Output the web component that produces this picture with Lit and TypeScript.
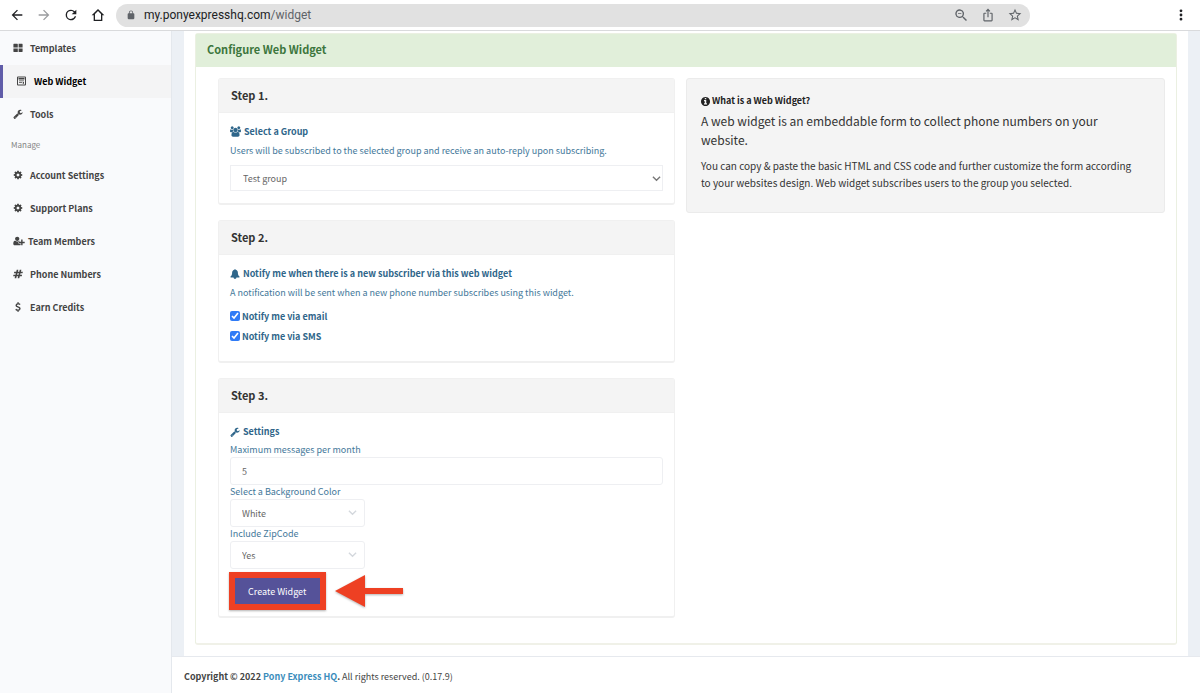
import { LitElement, html, css, svg } from "lit";
import { customElement, property, state } from "lit/decorators.js";

type Glyph = { box: string; d: string };

const GLYPHS: Record<string, Glyph> = {
  templates: {
    box: "0 0 24 22",
    d: "M2 1h8.500a1 1 0 0 1 1 1v7.500H1V2a1 1 0 0 1 1-1zM13.500 1H22a1 1 0 0 1 1 1v7.500h-9.500zM1 12h10.500v8.500H2a1 1 0 0 1-1-1zM13.500 12H23v7.500a1 1 0 0 1-1 1h-8.500z",
  },
  widget: {
    box: "0 0 20 20",
    d: "M3 1h14a2 2 0 0 1 2 2v14a2 2 0 0 1-2 2H3a2 2 0 0 1-2-2V3a2 2 0 0 1 2-2zM3 3v14h14V3zM4 4h12v3H4zM5 9h10v1.500H5zM5 12h6v1.500H5zM12.500 12H15v3.500h-2.500z",
  },
  cog: {
    box: "0 0 1792 1792",
    d: "M1152 896q0-106-75-181t-181-75-181 75-75 181 75 181 181 75 181-75 75-181zm512-109v222q0 12-8 23t-20 13l-185 28q-19 54-39 91 35 50 107 138 10 12 10 25t-9 23q-27 37-99 108t-94 71q-12 0-26-9l-138-108q-44 23-91 38-16 136-29 186-7 28-36 28h-222q-14 0-24.5-8.5t-11.5-21.5l-28-184q-49-16-90-37l-141 107q-10 9-25 9-14 0-25-11-126-114-165-168-7-10-7-23 0-12 8-23 15-21 51-66.5t54-70.5q-27-50-41-99l-183-27q-13-2-21-12.5t-8-23.5v-222q0-12 8-23t19-13l186-28q14-46 39-92-40-57-107-138-10-12-10-24 0-10 9-23 26-36 98.5-107.5t94.5-71.5q13 0 26 10l138 107q44-23 91-38 16-136 29-186 7-28 36-28h222q14 0 24.5 8.500t11.500 21.500l28 184q49 16 90 37l142-107q9-9 24-9 13 0 25 10 129 119 165 170 7 8 7 22 0 12-8 23-15 21-51 66.500t-54 70.500q26 50 41 98l183 28q13 2 21 12.500t8 23.500z",
  },
  wrench: {
    box: "0 0 1792 1792",
    d: "M448 1472q0-26-19-45t-45-19-45 19-19 45 19 45 45 19 45-19 19-45zm644-420l-682 682q-37 37-90 37-52 0-91-37l-106-108q-38-36-38-90 0-53 38-91l681-681q39 98 114.500 173.500t173.500 114.500zm634-435q0 39-23 106-47 134-164.500 217.500t-258.500 83.500q-185 0-316.500-131.500t-131.500-316.500 131.500-316.500 316.500-131.500q58 0 121.500 16.500t107.500 46.500q16 11 16 28t-16 28l-293 169v224l193 107q5-3 79-48.500t135.500-81 70.500-35.500q15 0 23.500 10t8.500 25z",
  },
  userPlus: {
    box: "0 0 2048 1792",
    d: "M704 896q-159 0-271.500-112.500t-112.500-271.500 112.500-271.500 271.500-112.500 271.500 112.500 112.500 271.500-112.500 271.500-271.500 112.500zm960 128h352q13 0 22.500 9.500t9.500 22.500v192q0 13-9.500 22.500t-22.500 9.500h-352v352q0 13-9.500 22.500t-22.500 9.500h-192q-13 0-22.500-9.500t-9.500-22.500v-352h-352q-13 0-22.500-9.500t-9.500-22.500v-192q0-13 9.500-22.500t22.500-9.500h352v-352q0-13 9.500-22.500t22.500-9.500h192q13 0 22.500 9.500t9.500 22.500v352zm-736 224q0 52 38 90t90 38h256v238q-68 50-171 50h-874q-121 0-194-69t-73-190q0-53 3.500-103.500t14-109 26.500-108.500 43-97.500 62-81 85.500-53.500 111.500-20q19 0 39 17 79 61 154.500 91.500t164.500 30.500 164.500-30.500 154.500-91.500q20-17 39-17 132 0 217 96h-223q-52 0-90 38t-38 90v192z",
  },
  hashtag: {
    box: "0 0 1792 1792",
    d: "M991 1024l64-256h-254l-64 256h254zm768-504l-56 224q-7 24-31 24h-327l-64 256h311q15 0 25 12 10 14 6 28l-56 224q-5 24-31 24h-327l-81 328q-7 24-31 24h-224q-16 0-26-12-9-12-6-28l78-312h-254l-81 328q-7 24-31 24h-225q-15 0-25-12-9-12-6-28l78-312h-311q-15 0-25-12-9-12-6-28l56-224q7-24 31-24h327l64-256h-311q-15 0-25-12-10-14-6-28l56-224q5-24 31-24h327l81-328q7-24 32-24h224q15 0 25 12 9 12 6 28l-78 312h254l81-328q7-24 32-24h224q15 0 25 12 9 12 6 28l-78 312h311q15 0 25 12 9 12 6 28z",
  },
  dollar: {
    box: "384 0 1024 1792",
    d: "M1362 1185q0 153-99.500 263.500t-258.500 136.500v175q0 14-9 23t-23 9h-135q-13 0-22.500-9.500t-9.500-22.500v-175q-66-9-127.500-31t-101.500-44.500-74-48-46.500-37.500-17.500-18q-17-21-2-41l103-135q7-10 23-12 15-2 24 9l2 2q113 99 243 125 37 8 74 8 81 0 142.500-43t61.500-122q0-28-15-53t-33.500-42-58.500-37.500-66-32-80-32.500q-39-16-61.500-25t-61.500-26.500-62.500-31-56.500-35.500-53.500-42.500-43.500-49-35.500-58-21-66.500-8.500-78q0-138 98-242t255-134v-180q0-13 9.500-22.500t22.500-9.500h135q14 0 23 9t9 23v176q57 6 110.500 23t87 33.500 63.500 37.500 39 29 15 14q17 18 5 38l-81 146q-8 15-23 16-14 3-27-7-3-3-14.500-12t-39-26.500-58.500-32-74.500-26-85.500-11.500q-95 0-155 43t-60 111q0 26 8.500 48t29.500 41.500 39.500 33 56 31 60.500 27 70 27.500q53 20 81 31.500t76 35 75.500 42.500 62 50 53 63.500 31.500 76.500 13 94z",
  },
  users: {
    box: "-64 0 1920 1792",
    d: "M529 896q-162 5-265 128h-134q-82 0-138-40.500t-56-118.500q0-353 124-353 6 0 43.500 21t97.500 42.500 119 21.500q67 0 133-23-5 37-5 66 0 139 81 256zm1071 637q0 120-73 189.500t-194 69.500h-874q-121 0-194-69.500t-73-189.500q0-53 3.500-103.500t14-109 26.500-108.500 43-97.500 62-81 85.500-53.500 111.500-20q10 0 43 21.500t73 48 107 48 135 21.500 135-21.500 107-48 73-48 43-21.500q61 0 111.500 20t85.500 53.500 62 81 43 97.500 26.500 108.500 14 109 3.500 103.500zm-1024-1277q0 106-75 181t-181 75-181-75-75-181 75-181 181-75 181 75 75 181zm704 384q0 159-112.500 271.500t-271.500 112.500-271.500-112.500-112.500-271.500 112.500-271.500 271.500-112.500 271.500 112.500 112.500 271.500zm576 225q0 78-56 118.500t-138 40.500h-134q-103-123-265-128 81-117 81-256 0-29-5-66 66 23 133 23 59 0 119-21.500t97.500-42.500 43.500-21q124 0 124 353zm-128-609q0 106-75 181t-181 75-181-75-75-181 75-181 181-75 181 75 75 181z",
  },
  bell: {
    box: "64 0 1664 1792",
    d: "M1728 1408q0 52-38 90t-90 38h-448q0 106-75 181t-181 75-181-75-75-181h-448q-52 0-90-38t-38-90q50-42 91-88t85-119.500 74.500-158.500 50-206 19.500-260q0-152 117-282.500t307-158.500q-8-19-8-39 0-40 28-68t68-28 68 28 28 68q0 20-8 39 190 28 307 158.500t117 282.500q0 139 19.500 260t50 206 74.500 158.500 85 119.500 91 88z",
  },
  info: {
    box: "128 128 1536 1536",
    d: "M1152 1376v-160q0-14-9-23t-23-9h-96v-512q0-14-9-23t-23-9h-320q-14 0-23 9t-9 23v160q0 14 9 23t23 9h96v320h-96q-14 0-23 9t-9 23v160q0 14 9 23t23 9h448q14 0 23-9t9-23zm-128-896v-160q0-14-9-23t-23-9h-192q-14 0-23 9t-9 23v160q0 14 9 23t23 9h192q14 0 23-9t9-23zm640 416q0 209-103 385.500t-279.500 279.500-385.500 103-385.500-103-279.500-279.500-103-385.500 103-385.500 279.500-279.500 385.500-103 385.500 103 279.500 279.500 103 385.500z",
  },
  back: { box: "0 0 24 24", d: "M20 11H7.800l5.600-5.600L12 4l-8 8 8 8 1.400-1.400L7.800 13H20z" },
  forward: { box: "0 0 24 24", d: "M12 4l-1.400 1.400 5.600 5.600H4v2h12.200l-5.600 5.600L12 20l8-8z" },
  reload: {
    box: "0 0 24 24",
    d: "M17.650 6.350A7.958 7.958 0 0 0 12 4a8 8 0 1 0 7.730 10h-2.080A5.990 5.990 0 0 1 12 18a6 6 0 1 1 0-12c1.660 0 3.140.690 4.220 1.780L13 11h7V4z",
  },
  home: { box: "0 0 24 24", d: "M12 3L2.500 12.500h3V21h13v-8.500h3zM12 5.900l4.500 4.600V19h-9v-8.500z" },
  lock: {
    box: "0 0 24 24",
    d: "M18 8h-1V6A5 5 0 0 0 7 6v2H6a2 2 0 0 0-2 2v10a2 2 0 0 0 2 2h12a2 2 0 0 0 2-2V10a2 2 0 0 0-2-2zM8.900 6a3.100 3.100 0 0 1 6.200 0v2H8.900z",
  },
  zoomOut: {
    box: "1 1 21 21",
    d: "M15.500 14h-.790l-.280-.270A6.500 6.500 0 1 0 13.730 14.430l.270.280v.790l5 4.990L20.490 19zM9.500 14a4.500 4.500 0 1 1 0-9 4.500 4.500 0 0 1 0 9zM7 9h5v1H7z",
  },
  share: {
    box: "0 0 24 24",
    d: "M16 5l-1.420 1.420-1.590-1.590V16h-1.980V4.830L9.420 6.420 8 5l4-4zM20 10v11a2 2 0 0 1-2 2H6a2 2 0 0 1-2-2V10a2 2 0 0 1 2-2h3v2H6v11h12V10h-3V8h3a2 2 0 0 1 2 2z",
  },
  star: {
    box: "1 1 22 22",
    d: "M22 9.240l-7.190-.620L12 2 9.190 8.630 2 9.240l5.460 4.730L5.820 21 12 17.270 18.180 21l-1.630-7.030zM12 15.400l-3.760 2.270 1-4.280-3.320-2.880 4.380-.380L12 6.100l1.710 4.040 4.380.380-3.320 2.880 1 4.280z",
  },
  more: { box: "2 2 20 20", d: "M12 8a2 2 0 1 0 0-4 2 2 0 0 0 0 4zm0 2a2 2 0 1 0 0 4 2 2 0 0 0 0-4zm0 6a2 2 0 1 0 0 4 2 2 0 0 0 0-4z" },
};

@customElement("app-icon")
class AppIcon extends LitElement {
  @property() name = "cog";
  static styles = css`
    :host {
      display: inline-flex;
      width: 10px;
      height: 10px;
      flex: none;
    }
    .glyph {
      width: 100%;
      height: 100%;
      fill: currentColor;
      fill-rule: evenodd;
    }
  `;
  render() {
    const g = GLYPHS[this.name];
    return html`<svg class="glyph" viewBox=${g.box} aria-hidden="true">${svg`<path d=${g.d}></path>`}</svg>`;
  }
}

const textBase = css`
  * {
    box-sizing: border-box;
  }
  h1, h2, h3, p {
    margin: 0;
  }
  a {
    color: inherit;
    text-decoration: none;
  }
  button, input, select {
    font: inherit;
    color: inherit;
  }
`;

@customElement("browser-bar")
class BrowserBar extends LitElement {
  static styles = [
    textBase,
    css`
      :host {
        display: flex;
        align-items: center;
        height: 31px;
        padding: 0 12px 0 9px;
        border-bottom: 1px solid #d9dadc;
        background: #fff;
        color: #202124;
      }
      .tool {
        display: flex;
        padding: 0;
        border: 0;
        background: none;
      }
      .tool app-icon {
        width: 14px;
        height: 14px;
      }
      .nav {
        display: flex;
        gap: 11px;
        margin-right: 10px;
      }
      .nav app-icon {
        width: 16px;
        height: 16px;
      }
      .faded {
        color: #9a9c9f;
      }
      .address {
        flex: 1;
        display: flex;
        align-items: center;
        gap: 8px;
        height: 23px;
        padding: 0 8px 0 10px;
        border-radius: 12px;
        background: #e1e1e1;
        color: #5f6368;
      }
      .address .lock {
        width: 10px;
        height: 10px;
      }
      .url {
        flex: 1;
        min-width: 0;
        font: 12px/16px Roboto, sans-serif;
      }
      .host {
        color: #202124;
      }
      .tools {
        display: flex;
        gap: 13px;
      }
      .menu {
        margin-left: 144px;
      }
    `,
  ];
  render() {
    return html`
      <div class="nav">
        <button class="tool" aria-label="Back"><app-icon name="back"></app-icon></button>
        <button class="tool faded" aria-label="Forward"><app-icon name="forward"></app-icon></button>
        <button class="tool" aria-label="Reload"><app-icon name="reload"></app-icon></button>
        <button class="tool" aria-label="Home"><app-icon name="home"></app-icon></button>
      </div>
      <div class="address">
        <app-icon class="lock" name="lock"></app-icon>
        <span class="url"><span class="host">my.ponyexpresshq.com</span>/widget</span>
        <div class="tools">
          <button class="tool" aria-label="Zoom out"><app-icon name="zoomOut"></app-icon></button>
          <button class="tool" aria-label="Share"><app-icon name="share"></app-icon></button>
          <button class="tool" aria-label="Bookmark"><app-icon name="star"></app-icon></button>
        </div>
      </div>
      <button class="tool menu" aria-label="Menu"><app-icon name="more"></app-icon></button>
    `;
  }
}

@customElement("side-nav")
class SideNav extends LitElement {
  static styles = [
    textBase,
    css`
      :host {
        display: block;
        width: 172px;
        flex: none;
        border-right: 1px solid #e4e8ed;
        background: #f9fafc;
        color: #444;
        font-weight: 700;
        font-size: 9px;
        line-height: 17px;
      }
      .item {
        display: flex;
        align-items: center;
        gap: 7px;
        height: 33px;
        padding: 0 0 1px 13px;
      }
      .first {
        height: 34px;
        padding-bottom: 0;
      }
      .active {
        border-left: 3px solid #605ca8;
        background: #f4f4f5;
        color: #000;
      }
      .active app-icon {
        width: 11px;
        color: #444;
      }
      .wide {
        gap: 3px;
      }
      .wide app-icon {
        width: 12px;
      }
      .heading {
        padding: 5px 11px 6px;
        color: #848484;
        font-weight: 400;
        font-size: 8px;
      }
    `,
  ];
  render() {
    return html`
      <nav>
        <a class="item first" href="#templates"><app-icon name="templates"></app-icon>Templates</a>
        <a class="item active" href="#widget" aria-current="page"><app-icon name="widget"></app-icon>Web Widget</a>
        <a class="item" href="#tools"><app-icon name="wrench"></app-icon>Tools</a>
        <div class="heading">Manage</div>
        <a class="item" href="#account"><app-icon name="cog"></app-icon>Account Settings</a>
        <a class="item" href="#support"><app-icon name="cog"></app-icon>Support Plans</a>
        <a class="item wide" href="#team"><app-icon name="userPlus"></app-icon>Team Members</a>
        <a class="item" href="#numbers"><app-icon name="hashtag"></app-icon>Phone Numbers</a>
        <a class="item" href="#credits"><app-icon name="dollar"></app-icon>Earn Credits</a>
      </nav>
    `;
  }
}

@customElement("step-card")
class StepCard extends LitElement {
  @property() heading = "";
  static styles = [
    textBase,
    css`
      :host {
        display: block;
        border: 1px solid #f0f0f0;
        border-bottom-width: 2px;
        border-radius: 3px;
        background: #fff;
      }
      .title {
        padding: 8px 12px;
        border-bottom: 1px solid #f0f0f0;
        background: #f4f4f4;
        color: #333;
        font-size: 11px;
        line-height: 17px;
      }
      .body {
        padding: 10px 11px 11px;
      }
    `,
  ];
  render() {
    return html`<h2 class="title">${this.heading}</h2><div class="body"><slot></slot></div>`;
  }
}

@customElement("widget-form")
class WidgetForm extends LitElement {
  @state() private viaEmail = true;
  @state() private viaSms = true;
  static styles = [
    textBase,
    css`
      :host {
        display: flex;
        flex-direction: column;
        gap: 15px;
        color: #31708f;
        font-size: 9px;
      }
      .topic {
        display: flex;
        align-items: center;
        gap: 3px;
        color: #2f668a;
        font-size: 9px;
        line-height: 17px;
      }
      .crowd {
        width: 11px;
        height: 11px;
      }
      .hint {
        display: block;
        padding: 2px 0;
        color: #44789a;
        line-height: 17px;
      }
      .control {
        display: block;
        width: 100%;
        height: 28px;
        padding: 0 12px;
        border: 1px solid #eeeff2;
        background: #fff;
        color: #666;
      }
      .pick {
        position: relative;
        display: block;
      }
      .pick select {
        appearance: none;
      }
      .group {
        margin: 4px 0 1px;
      }
      .group .control {
        height: 26px;
        padding: 0 12px;
      }
      .caret {
        position: absolute;
        right: 2px;
        top: 9px;
        width: 9px;
        height: 9px;
        fill: none;
        stroke: #777;
        stroke-width: 1.500;
        pointer-events: none;
      }
      .small {
        width: 135px;
      }
      .small .caret {
        right: 8px;
        stroke: #d4d8dd;
      }
      .rounded {
        padding: 0 11px;
        border-radius: 3px;
      }
      .settings {
        margin-bottom: 3px;
      }
      .label {
        display: block;
        color: #44789a;
        line-height: 14px;
      }
      .check {
        display: flex;
        align-items: center;
        gap: 2px;
        color: #2f668a;
        font-weight: 700;
        line-height: 20px;
      }
      .check input {
        width: 10px;
        height: 10px;
        margin: 0 0 2px;
        accent-color: #2f7bf6;
      }
      .checks {
        padding: 4px 0 3px;
      }
      .action {
        position: relative;
        display: block;
        width: fit-content;
        margin-top: 8px;
      }
      .create {
        display: block;
        height: 28px;
        padding: 0 18px;
        border: 0;
        border-radius: 3px;
        background: #555299;
        color: #fff;
      }
      .frame {
        position: absolute;
        inset: -5px -2px -5px -1px;
        border: 6px solid #ee4023;
        box-shadow: 0 1px 2px rgba(0, 0, 0, 0.3);
        pointer-events: none;
      }
      .arrow {
        position: absolute;
        left: calc(100% + 9px);
        top: -3px;
        width: 72px;
        height: 34px;
        fill: #ee4023;
        filter: drop-shadow(0 1px 1px rgba(0, 0, 0, 0.3));
      }
    `,
  ];
  private caret() {
    return html`<svg class="caret" viewBox="0 0 10 10" aria-hidden="true"><path d="M1 3l4 4 4-4"></path></svg>`;
  }
  render() {
    return html`
      <step-card heading="Step 1.">
        <h3 class="topic"><app-icon class="crowd" name="users"></app-icon>Select a Group</h3>
        <label class="hint" for="group">Users will be subscribed to the selected group and receive an auto-reply upon subscribing.</label>
        <div class="pick group">
          <select class="control" id="group"><option>Test group</option></select>${this.caret()}
        </div>
      </step-card>
      <step-card heading="Step 2.">
        <h3 class="topic"><app-icon name="bell"></app-icon>Notify me when there is a new subscriber via this web widget</h3>
        <p class="hint">A notification will be sent when a new phone number subscribes using this widget.</p>
        <div class="checks">
          <label class="check"><input type="checkbox" .checked=${this.viaEmail} @change=${() => (this.viaEmail = !this.viaEmail)} />Notify me via email</label>
          <label class="check"><input type="checkbox" .checked=${this.viaSms} @change=${() => (this.viaSms = !this.viaSms)} />Notify me via SMS</label>
        </div>
      </step-card>
      <step-card heading="Step 3.">
        <h3 class="topic settings"><app-icon name="wrench"></app-icon>Settings</h3>
        <label class="label" for="max">Maximum messages per month</label>
        <input class="control rounded" id="max" value="5" />
        <label class="label" for="color">Select a Background Color</label>
        <div class="pick small">
          <select class="control rounded" id="color"><option>White</option></select>${this.caret()}
        </div>
        <label class="label" for="zip">Include ZipCode</label>
        <div class="pick small">
          <select class="control rounded" id="zip"><option>Yes</option></select>${this.caret()}
        </div>
        <div class="action">
          <button class="create">Create Widget</button>
          <span class="frame"></span>
          <svg class="arrow" viewBox="0 0 72 34" aria-hidden="true"><path d="M2 17L32 1v13h38v6H32v13z"></path></svg>
        </div>
      </step-card>
    `;
  }
}

@customElement("app-root")
class AppRoot extends LitElement {
  static styles = [
    textBase,
    css`
      :host {
        display: flex;
        flex-direction: column;
        min-height: 100vh;
        background: #fff;
        font-family: "Noto Sans CJK SC", "Open Sans", sans-serif;
        font-size: 10px;
        color: #444;
      }
      .page {
        flex: 1;
        display: flex;
      }
      .main {
        flex: 1;
        min-width: 0;
        display: flex;
        flex-direction: column;
        background: #ecf0f5;
      }
      .sheet {
        flex: 1;
        margin: 0 12px;
        padding: 2px 11px 10px;
        background: #fff;
      }
      .panel {
        border: 1px solid #ebf0e2;
        border-bottom: 2px solid #f0f1e8;
        border-radius: 3px;
      }
      .title {
        padding: 7px 11px 9px;
        background: #e1efda;
        color: #3c763d;
        font-size: 11px;
        line-height: 17px;
      }
      .columns {
        display: grid;
        grid-template-columns: 457fr 479fr;
        gap: 11px;
        align-items: start;
        padding: 11px 11px 25px 22px;
      }
      .about {
        padding: 14px 28px 21px 14px;
        border: 1px solid #ebebeb;
        border-radius: 3px;
        background: #f4f4f4;
        color: #333;
        font-size: 10px;
        line-height: 17px;
      }
      .question {
        display: flex;
        align-items: center;
        gap: 2px;
        color: #222;
        font-size: 9px;
        line-height: 16px;
      }
      .question app-icon {
        width: 9px;
        height: 9px;
      }
      .lead {
        margin: 2px 0 8px;
        font-size: 12px;
        line-height: 19px;
      }
      .footer {
        padding: 12px 12px 8px;
        border-top: 1px solid #e6e9ee;
        background: #fff;
        font-size: 9px;
        line-height: 16px;
      }
      .brand {
        color: #3c8dbc;
      }
    `,
  ];
  render() {
    return html`
      <browser-bar></browser-bar>
      <div class="page">
        <side-nav></side-nav>
        <div class="main">
          <main class="sheet">
            <section class="panel">
              <h1 class="title">Configure Web Widget</h1>
              <div class="columns">
                <widget-form></widget-form>
                <aside class="about">
                  <h2 class="question"><app-icon name="info"></app-icon>What is a Web Widget?</h2>
                  <p class="lead">A web widget is an embeddable form to collect phone numbers on your website.</p>
                  <p>You can copy &amp; paste the basic HTML and CSS code and further customize the form according to your websites design. Web widget subscribes users to the group you selected.</p>
                </aside>
              </div>
            </section>
          </main>
          <footer class="footer">
            <strong>Copyright © 2022 <a class="brand" href="#home">Pony Express HQ</a>.</strong> All rights reserved. (0.17.9)
          </footer>
        </div>
      </div>
    `;
  }
}
